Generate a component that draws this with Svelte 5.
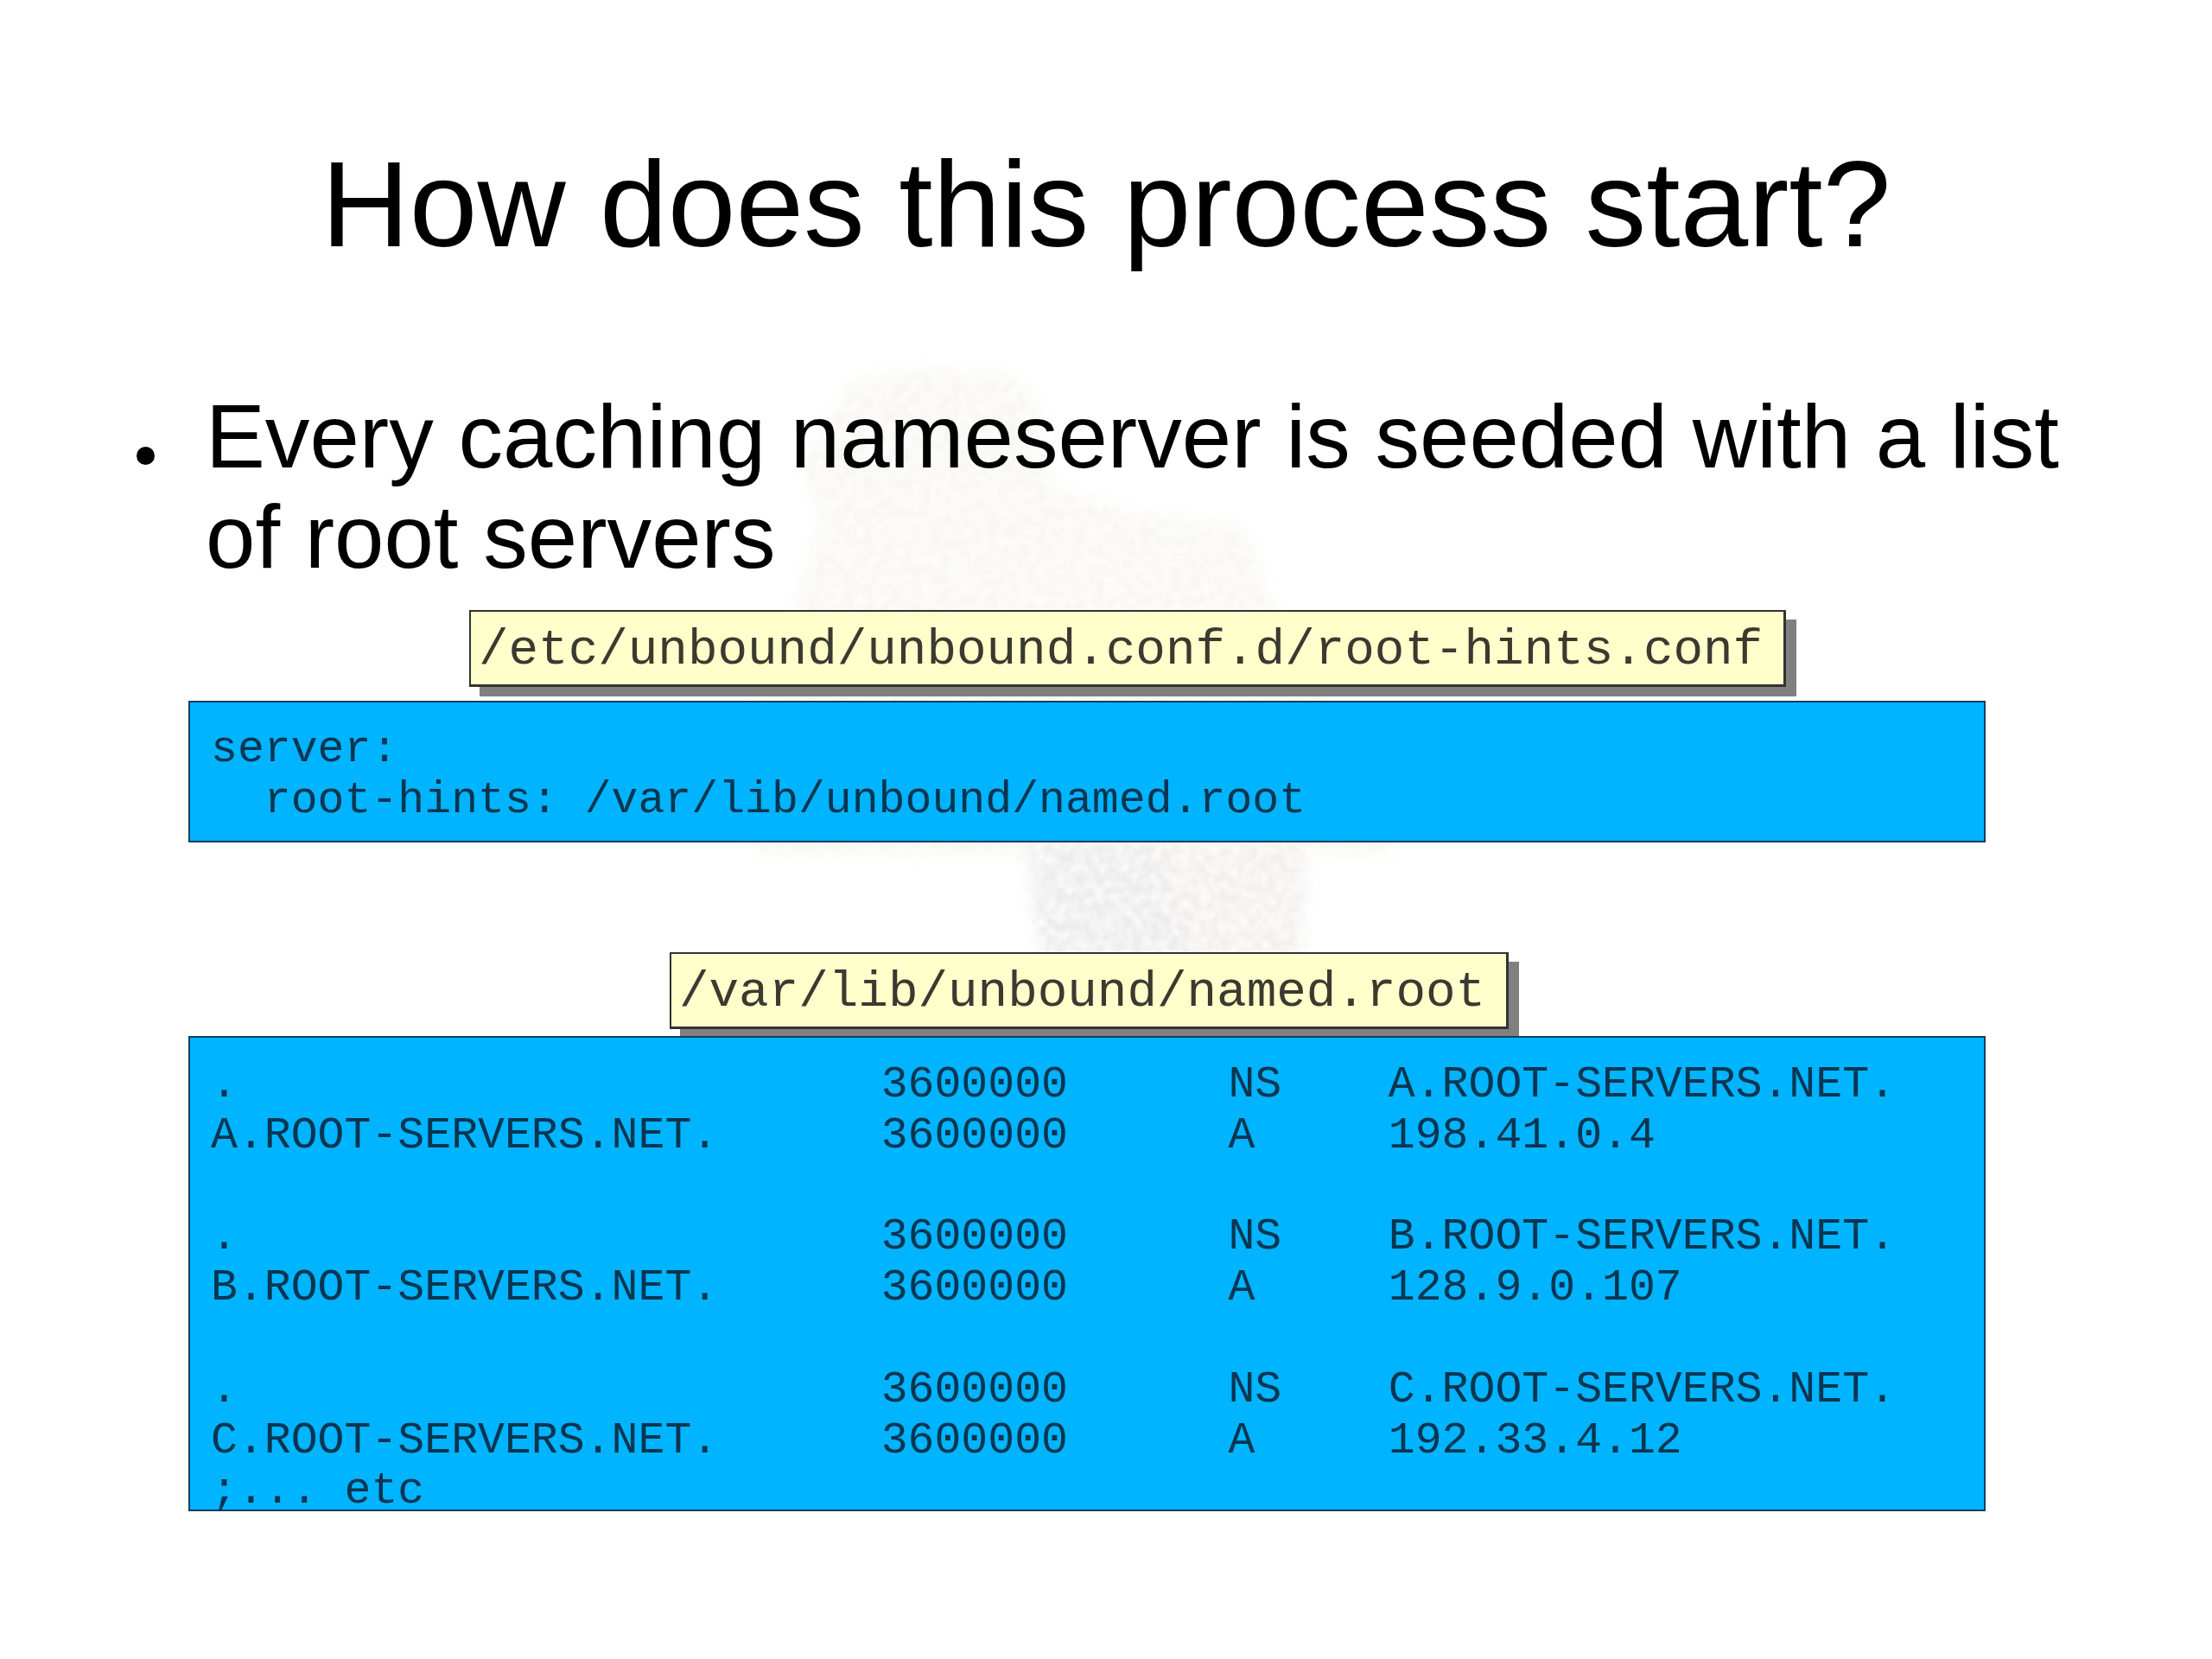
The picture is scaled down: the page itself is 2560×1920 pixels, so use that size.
<script>
  // root hints as they appear in the file, one block per server
  const hints = [
    { name: 'A.ROOT-SERVERS.NET.', ip: '198.41.0.4' },
    { name: 'B.ROOT-SERVERS.NET.', ip: '128.9.0.107' },
    { name: 'C.ROOT-SERVERS.NET.', ip: '192.33.4.12' }
  ];
</script>

<div class="slide">
  <svg class="watermark" viewBox="0 0 2560 1920" aria-hidden="true">
    <defs>
      <filter id="mottle" x="-5%" y="-5%" width="110%" height="110%">
        <feGaussianBlur in="SourceGraphic" stdDeviation="9" result="soft" />
        <feTurbulence type="fractalNoise" baseFrequency="0.09" numOctaves="2" seed="4" result="noise" />
        <feColorMatrix in="noise" type="matrix" values="0 0 0 0 0  0 0 0 0 0  0 0 0 0 0  0 0 0 -1.6 1.5" result="spots" />
        <feComposite in="soft" in2="spots" operator="in" />
        <feGaussianBlur stdDeviation="1.2" />
      </filter>
    </defs>
    <g filter="url(#mottle)">
      <path fill="#f8f7f2" d="M985 440 L1060 425 L1170 432 L1205 470 L1215 560 L1300 590 L1440 610 L1470 690 L1510 760 L1560 830 L1600 900 L1610 990 L880 990 L850 900 L880 790 L920 700 L950 600 L925 540 Z" />
      <path fill="#ececec" d="M1190 975 L1500 975 L1510 1010 L1505 1110 L1205 1110 L1195 1050 Z" />
      <path fill="#f5efea" d="M1340 975 L1500 975 L1505 1110 L1380 1110 Z" />
    </g>
  </svg>

  <h1>How does this process start?</h1>

  <ul>
    <li>Every caching nameserver is seeded with a list of root servers</li>
  </ul>

  <div class="label first">/etc/unbound/unbound.conf.d/root-hints.conf</div>
  <div class="code short">
    <div>server:</div>
    <div class="indent">root-hints: /var/lib/unbound/named.root</div>
  </div>

  <div class="label second">/var/lib/unbound/named.root</div>
  <div class="code tall">
    {#each hints as h, i}
      {#if i > 0}
        <div class="blank"></div>
      {/if}
      <div class="row"><span>.</span><span>3600000</span><span>NS</span><span>{h.name}</span></div>
      <div class="row"><span>{h.name}</span><span>3600000</span><span>A</span><span>{h.ip}</span></div>
    {/each}
    <div>;... etc</div>
  </div>
</div>

<style>
  :global(body) {
    margin: 0;
    background: #fff;
  }

  .slide {
    position: relative;
    width: 2560px;
    height: 1920px;
    padding-top: 156px;
    box-sizing: border-box;
    overflow: hidden;
    color: #000;
    font-family: "Liberation Sans", Arial, sans-serif;
    filter: blur(0.7px);
  }

  .watermark {
    position: absolute;
    inset: 0;
    width: 2560px;
    height: 1920px;
  }

  h1 {
    position: relative;
    margin: 0;
    font-size: 141.5px;
    font-weight: 400;
    line-height: 160px;
    text-align: center;
  }

  ul {
    position: relative;
    margin: 132px 0 0;
    padding: 0 140px 0 238px;
    list-style: none;
  }

  li {
    position: relative;
    font-size: 103.2px;
    line-height: 116px;
  }

  li::before {
    content: "";
    position: absolute;
    left: -80px;
    top: 69px;
    width: 21px;
    height: 21px;
    border-radius: 50%;
    background: #000;
  }

  .label {
    position: relative;
    width: fit-content;
    box-sizing: border-box;
    padding: 6px 24px 0 9px;
    background: #ffffcc;
    border: 2px solid #333;
    border-right-width: 3px;
    border-bottom-width: 3px;
    box-shadow: 12px 11px 0 #808080;
    color: #3a3a30;
    font-family: "Liberation Mono", "Courier New", monospace;
    font-size: 57.6px;
    line-height: 78px;
    white-space: pre;
  }

  .label.first {
    margin: 26px 0 0 543px;
  }

  .label.second {
    margin: 127px 0 0 775px;
  }

  .code {
    position: relative;
    box-sizing: border-box;
    width: 2080px;
    margin-left: 218px;
    padding: 25px 0 0 24px;
    background: #00b4ff;
    border: 2px solid #123f5c;
    color: #0a3550;
    font-family: "Liberation Mono", "Courier New", monospace;
    font-size: 51.5px;
    line-height: 58.8px;
  }

  .code.short {
    height: 164px;
    margin-top: 16px;
  }

  .code.tall {
    height: 550px;
    margin-top: 8px;
  }

  .indent {
    padding-left: 2ch;
  }

  .row {
    display: grid;
    grid-template-columns: calc(25ch + 3px) 13ch 6ch 1fr;
  }

  .blank {
    height: 58.8px;
  }
</style>
